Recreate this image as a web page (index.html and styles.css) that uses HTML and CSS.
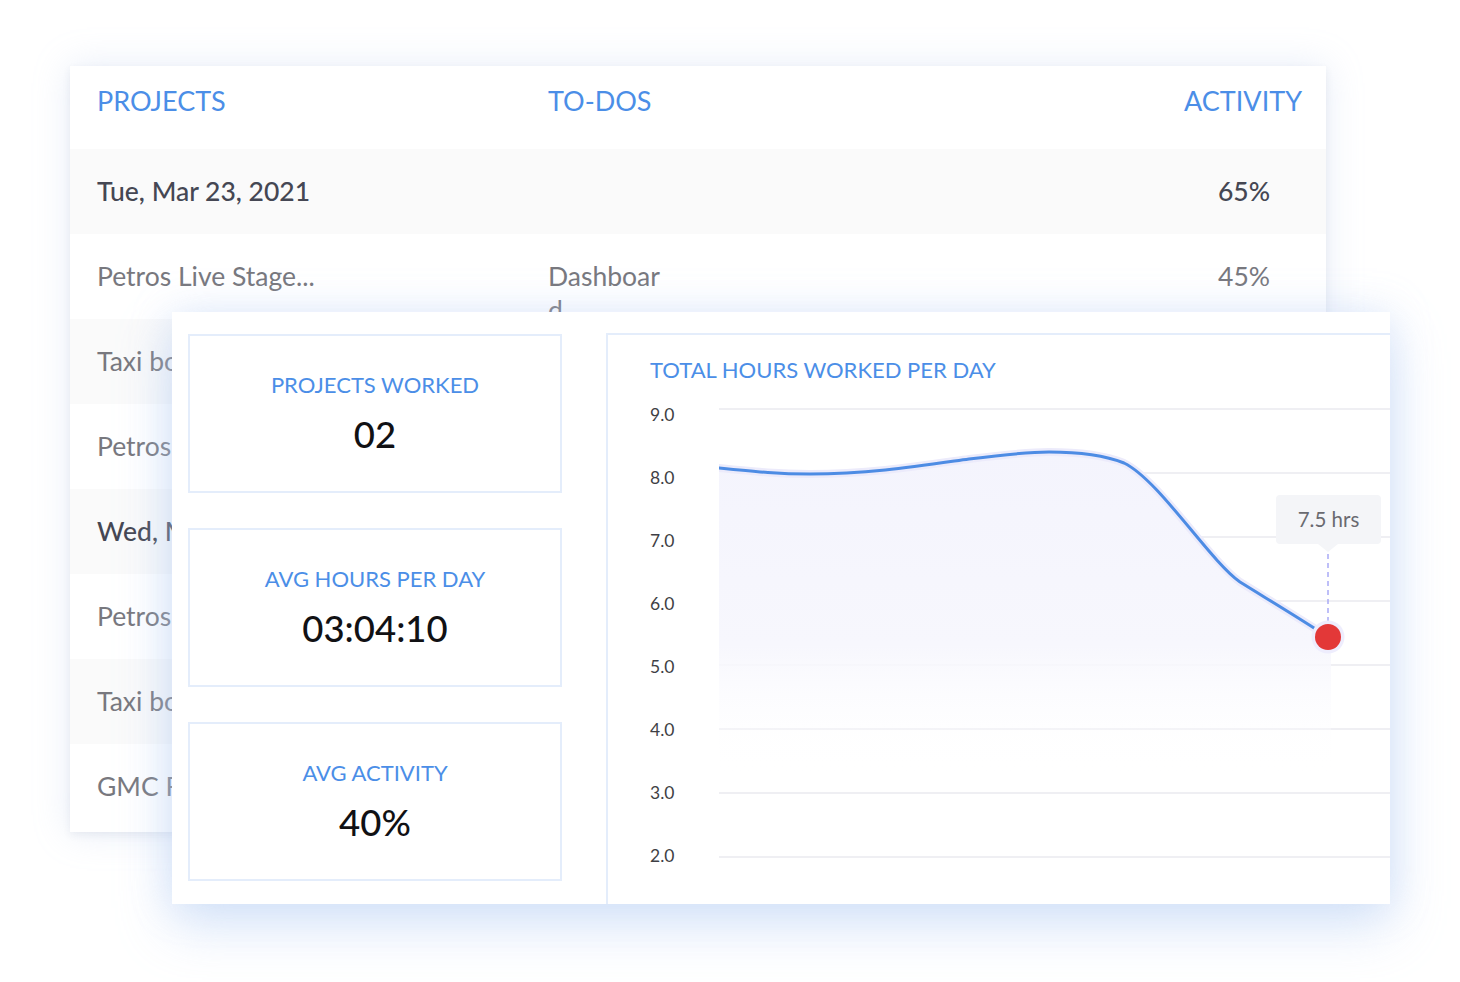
FILE: index.html
```html
<!DOCTYPE html>
<html lang="en">
<head>
<meta charset="utf-8">
<title>Time report</title>
<link rel="stylesheet" href="styles.css">
</head>
<body>
<div class="stage">
  <section class="table-card">
    <div class="t-row t-head">
      <div class="c1">PROJECTS</div>
      <div class="c2">TO-DOS</div>
      <div class="c3">ACTIVITY</div>
    </div>
    <div class="t-row t-date alt">
      <div class="c1">Tue, Mar 23, 2021</div>
      <div class="c2"></div>
      <div class="c3">65%</div>
    </div>
    <div class="t-row">
      <div class="c1">Petros Live Stage...</div>
      <div class="c2">Dashboard</div>
      <div class="c3">45%</div>
    </div>
    <div class="t-row alt">
      <div class="c1">Taxi booking app</div>
      <div class="c2">Login</div>
      <div class="c3">80%</div>
    </div>
    <div class="t-row">
      <div class="c1">Petros Live Stage...</div>
      <div class="c2">Reports</div>
      <div class="c3">70%</div>
    </div>
    <div class="t-row t-date alt">
      <div class="c1">Wed, Mar 24, 2021</div>
      <div class="c2"></div>
      <div class="c3">55%</div>
    </div>
    <div class="t-row">
      <div class="c1">Petros Live Stage...</div>
      <div class="c2">Settings</div>
      <div class="c3">40%</div>
    </div>
    <div class="t-row alt">
      <div class="c1">Taxi booking app</div>
      <div class="c2">Payments</div>
      <div class="c3">60%</div>
    </div>
    <div class="t-row">
      <div class="c1">GMC Redesign</div>
      <div class="c2">Profile</div>
      <div class="c3">35%</div>
    </div>
  </section>

  <section class="summary-card">
    <div class="stats">
      <div class="stat">
        <div class="stat-label">PROJECTS WORKED</div>
        <div class="stat-value">02</div>
      </div>
      <div class="stat">
        <div class="stat-label">AVG HOURS PER DAY</div>
        <div class="stat-value">03:04:10</div>
      </div>
      <div class="stat">
        <div class="stat-label">AVG ACTIVITY</div>
        <div class="stat-value">40%</div>
      </div>
    </div>
    <div class="chart-panel">
      <div class="chart-title">TOTAL HOURS WORKED PER DAY</div>
      <div class="chart-body">
        <div class="y-axis">
          <span>9.0</span><span>8.0</span><span>7.0</span><span>6.0</span>
          <span>5.0</span><span>4.0</span><span>3.0</span><span>2.0</span>
        </div>
        <div class="plot">
          <svg class="plot-svg" width="671" height="470" viewBox="0 0 671 470">
            <defs>
              <linearGradient id="fillGrad" x1="0" y1="50" x2="0" y2="375" gradientUnits="userSpaceOnUse">
                <stop offset="0" stop-color="#f4f4fd"/>
                <stop offset="0.6" stop-color="#f7f7fd"/>
                <stop offset="1" stop-color="#ffffff" stop-opacity="0"/>
              </linearGradient>
            </defs>
            <g stroke="#efeff3" stroke-width="2">
              <line x1="0" y1="9" x2="671" y2="9"/>
              <line x1="0" y1="73" x2="671" y2="73"/>
              <line x1="0" y1="137" x2="671" y2="137"/>
              <line x1="0" y1="201" x2="671" y2="201"/>
              <line x1="0" y1="265" x2="671" y2="265"/>
              <line x1="0" y1="329" x2="671" y2="329"/>
              <line x1="0" y1="393" x2="671" y2="393"/>
              <line x1="0" y1="457" x2="671" y2="457"/>
            </g>
            <path d="M0,68 C40,72 60,74 91,74 C150,74 200,66 250,59 C290,54 310,52 330,52 C360,52 385,55 405,63 C440,80 490,160 521,182 C550,200 580,218 612,238 L612,380 L0,380 Z" fill="url(#fillGrad)"/>
            <path d="M0,68 C40,72 60,74 91,74 C150,74 200,66 250,59 C290,54 310,52 330,52 C360,52 385,55 405,63 C440,80 490,160 521,182 C550,200 580,218 609,237" fill="none" stroke="#ecebfb" stroke-width="8" stroke-linecap="round"/>
            <path d="M0,68 C40,72 60,74 91,74 C150,74 200,66 250,59 C290,54 310,52 330,52 C360,52 385,55 405,63 C440,80 490,160 521,182 C550,200 580,218 609,237" fill="none" stroke="#4d8ce4" stroke-width="3" stroke-linecap="round"/>
            <line x1="609" y1="154" x2="609" y2="221" stroke="#a9abf6" stroke-width="1.5" stroke-dasharray="5 4"/>
            <circle cx="609" cy="237" r="16.5" fill="#eeedfd"/>
            <circle cx="609" cy="237" r="13" fill="#e33838"/>
          </svg>
          <div class="tooltip">7.5 hrs</div>
        </div>
      </div>
    </div>
  </section>
</div>
</body>
</html>
```

FILE: styles.css
```css
* { box-sizing: border-box; }

html, body {
  margin: 0;
  padding: 0;
  background: #ffffff;
}

body {
  width: 1460px;
  height: 982px;
  overflow: hidden;
  font-family: "Lato", "Noto Sans", "Liberation Sans", sans-serif;
}

.stage {
  position: relative;
  width: 1460px;
  height: 982px;
  padding: 66px 0 0 70px;
}

/* ---------- back table card ---------- */
.table-card {
  width: 1256px;
  height: 766px;
  background: #ffffff;
  box-shadow: 0 3px 8px rgba(40, 55, 90, 0.07), 0 0 34px rgba(170, 192, 232, 0.28);
  overflow: hidden;
}

.t-row {
  display: grid;
  grid-template-columns: 451px 120px 1fr;
  height: 85px;
  padding: 25px 56px 0 27px;
  font-size: 26.5px;
  line-height: 34px;
  color: #78787e;
}

.t-row.alt { background: #fafafa; }

.t-row .c2 { word-break: break-all; }
.t-row .c3 { text-align: right; }

.t-head {
  height: 83px;
  padding: 18px 24px 0 27px;
  font-size: 27px;
  color: #4b8ee7;
  background: #ffffff;
}

.t-date {
  color: #454753;
  font-weight: 500;
}

/* ---------- front summary card ---------- */
.summary-card {
  position: absolute;
  left: 172px;
  top: 312px;
  width: 1218px;
  height: 592px;
  background: #ffffff;
  box-shadow: 0 22px 50px rgba(170, 200, 242, 0.45), 0 0 36px rgba(190, 210, 245, 0.35);
  display: grid;
  grid-template-columns: 374px 1fr;
  column-gap: 44px;
  padding: 21px 0 0 16px;
  overflow: hidden;
}

.stats {
  display: flex;
  flex-direction: column;
  gap: 35px;
  padding-top: 1px;
}

.stat {
  height: 159px;
  border: 2px solid #e4edfb;
  display: flex;
  flex-direction: column;
  align-items: center;
  padding-top: 34px;
}

.stat-label {
  font-size: 22px;
  line-height: 30px;
  color: #4b8ee7;
}

.stat-value {
  margin-top: 14px;
  font-size: 36.5px;
  line-height: 40px;
  font-weight: 500;
  color: #111114;
}

.chart-panel {
  border-top: 2px solid #e4edfb;
  border-left: 2px solid #e4edfb;
  padding: 22px 0 0 42px;
}

.chart-title {
  font-size: 22px;
  line-height: 26px;
  color: #4b8ee7;
}

.chart-body {
  display: grid;
  grid-template-columns: 69px 1fr;
}

.y-axis {
  display: flex;
  flex-direction: column;
}

.y-axis span {
  height: 63px;
  line-height: 63px;
  font-size: 17.5px;
  color: #3f3f45;
}

.plot {
  position: relative;
  padding-top: 17px;
}

.plot-svg { display: block; }

.tooltip {
  position: absolute;
  left: 557px;
  top: 112px;
  width: 105px;
  height: 49px;
  background: #f4f5f8;
  border-radius: 4px;
  font-size: 20.5px;
  line-height: 49px;
  text-align: center;
  color: #6a6a70;
}

.tooltip::after {
  content: "";
  position: absolute;
  left: 42px;
  bottom: -8px;
  border-left: 10px solid transparent;
  border-right: 10px solid transparent;
  border-top: 8px solid #f4f5f8;
}
```
